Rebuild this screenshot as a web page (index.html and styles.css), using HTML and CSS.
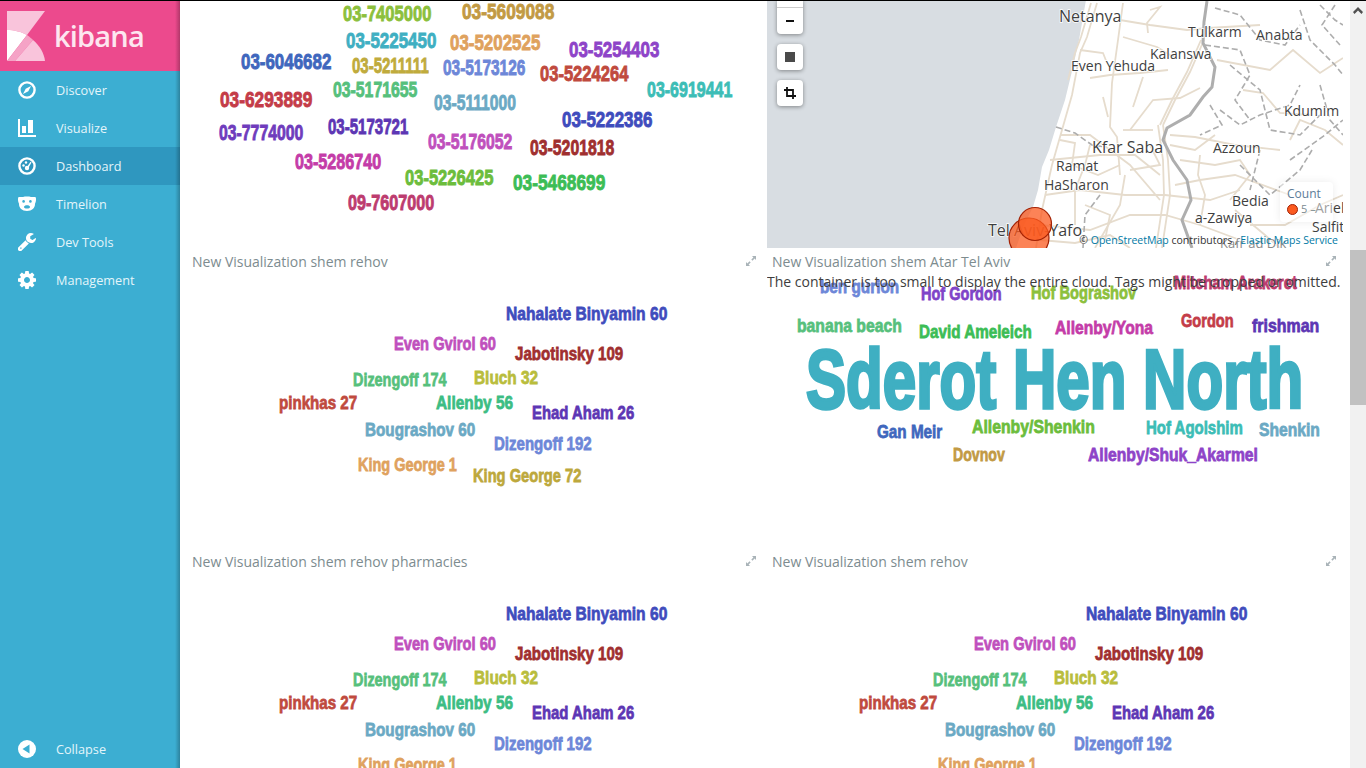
FILE: index.html
```html
<!DOCTYPE html>
<html lang="en">
<head>
    <meta charset="UTF-8">
    <meta name="viewport" content="width=device-width, initial-scale=1.0">
    <title>Dashboard - Kibana</title>
    <link rel="stylesheet" href="styles.css">
    <script src="cloud.js"></script>
</head>
<body>
    <div class="app">
        <nav class="sidebar">
            <div class="logo">
                <svg class="logo-mark" viewBox="7 11 38 50">
                    <path fill="#f9c4db" d="M7 11H45L27 35C22 32 14 30 7 30Z"/>
                    <path fill="#fff" d="M7 30C14 30 22 32 27 35L7 61Z"/>
                    <path fill="#f5a3c6" d="M7 61L27 35C30 37 32 39 33 40L15 61Z"/>
                    <path fill="#f9c4db" d="M33 40C40 46 44 53 45 61H15Z"/>
                </svg>
                <span class="logo-text">kibana</span>
            </div>
            <a class="nav-item">
                <svg class="nav-icon" viewBox="0 0 18 18"><circle cx="9" cy="9" r="7.6" fill="none" stroke="#fff" stroke-width="2.4"/><path fill="#fff" d="M13 5L10.3 10.3 5 13 7.7 7.7Z"/></svg>
                Discover
            </a>
            <a class="nav-item">
                <svg class="nav-icon" viewBox="0 0 18 18"><path fill="#fff" d="M0 0H2V16H18V18H0Z"/><path fill="#fff" d="M4 7H8V14H4ZM10 1H15V14H10Z"/></svg>
                Visualize
            </a>
            <a class="nav-item active">
                <svg class="nav-icon" viewBox="0 0 18 18"><circle cx="9" cy="9" r="7.6" fill="none" stroke="#fff" stroke-width="2.4"/><circle cx="9" cy="11" r="2.2" fill="#fff"/><path fill="#fff" d="M9 10L12.5 4.8 13.5 5.6 10.4 11Z"/><circle cx="5.5" cy="8.5" r="1.2" fill="#fff"/><circle cx="8" cy="5.5" r="1.2" fill="#fff"/></svg>
                Dashboard
            </a>
            <a class="nav-item">
                <svg class="nav-icon" viewBox="0 0 18 18"><path fill="#fff" d="M1 2H5C7 1.4 11 1.4 13 2H17C18 2 18 3 18 5 18 7 17 8 17 9 17 13 14 16 9 16 4 16 1 13 1 9 1 8 0 7 0 5 0 3 0 2 1 2Z"/><circle cx="5.6" cy="6.4" r="1.3" fill="#3caed2"/><circle cx="12.4" cy="6.4" r="1.3" fill="#3caed2"/><path fill="#3caed2" d="M6 12C6 9.5 12 9.5 12 12 12 14 6 14 6 12Z"/></svg>
                Timelion
            </a>
            <a class="nav-item">
                <svg class="nav-icon" viewBox="128 128 1600 1600"><path fill="#fff" d="M448 1472q0-26-19-45t-45-19-45 19-19 45 19 45 45 19 45-19 19-45zm644-420l-682 682q-37 37-90 37-52 0-91-37l-106-108q-38-36-38-90 0-53 38-91l681-681q39 98 114.5 173.5t173.5 114.5zm634-435q0 39-23 106-47 134-164.5 217.5t-258.5 83.5q-185 0-316.5-131.5t-131.5-316.5 131.5-316.5 316.5-131.5q58 0 121.5 16.5t107.5 46.5q16 11 16 28t-16 28l-293 169v224l193 107q5-3 79-48.5t135.5-81 70.5-35.5q15 0 23.5 10t8.5 25z"/></svg>
                Dev Tools
            </a>
            <a class="nav-item">
                <svg class="nav-icon" viewBox="128 128 1536 1536"><path fill="#fff" d="M1152 896q0-106-75-181t-181-75-181 75-75 181 75 181 181 75 181-75 75-181zm512-109v222q0 12-8 23t-20 13l-185 28q-19 54-39 91 35 50 107 138 10 12 10 25t-9 23q-27 37-99 108t-94 71q-12 0-26-9l-138-108q-44 23-91 38-16 136-29 186-7 28-36 28h-222q-14 0-24.5-8.5t-11.5-21.5l-28-184q-49-16-90-37l-141 107q-10 9-25 9-14 0-25-11-126-114-165-168-7-10-7-23 0-12 8-23 15-21 51-66.5t54-70.5q-27-50-41-99l-183-27q-13-2-21-12.5t-8-23.5v-222q0-12 8-23t19-13l186-28q14-46 39-92-40-57-107-138-10-12-10-24 0-10 9-23 26-36 98.5-107.5t94.5-71.5q13 0 26 10l138 107q44-23 91-38 16-136 29-186 7-28 36-28h222q14 0 24.5 8.5t11.5 21.5l28 184q49 16 90 37l142-107q9-9 24-9 13 0 25 10 129 119 165 170 7 8 7 22 0 12-8 23-15 21-51 66.5t-54 70.5q26 50 41 98l183 28q13 2 21 12.5t8 23.5z"/></svg>
                Management
            </a>
            <a class="nav-item collapse">
                <svg class="nav-icon" viewBox="0 0 18 18"><circle cx="9" cy="9" r="9" fill="#fff"/><path fill="#3caed2" d="M4.5 9L11.5 4.5V13.5Z"/></svg>
                Collapse
            </a>
        </nav>

        <main class="dashboard">
            <section class="panel">
                <div class="cloud" data-words="phones" data-origin="187,1"></div>
            </section>

            <section class="panel map">
                <svg class="map-svg" viewBox="767 1 576 247">
                    <rect x="767" y="0" width="576" height="248" fill="#fff"/>
                    <path fill="#d8dde2" d="M767 0H1086L1079 40 1073 67 1065 100 1056 127 1049 150 1042 167 1038 190 1033 207 1024 225 1016 248H767Z"/>
                    <g class="roads">
                        <path d="M1204 40L1190 72 1175 100 1163 125"/>
                        <path d="M1201 40L1187 72 1172 100 1160 125"/>
                        <path d="M1163 125L1168 160 1170 195 1162 248"/>
                        <path d="M1158 125L1163 160 1164 195 1156 248"/>
                        <path d="M1097 3L1087 37 1080 53 1072 95 1062 130 1052 165 1042 210 1036 248"/>
                        <path d="M1091 3L1081 37 1075 53 1068 80"/>
                        <path d="M1120 20L1150 25 1187 30 1208 28 1260 25"/>
                        <path d="M1123 3L1118 40 1112 83 1110 127 1117 137 1120 175"/>
                        <path d="M1150 10L1160 7 1147 23 1148 33"/>
                        <path d="M1123 37L1157 47 1175 58"/>
                        <path d="M1090 78L1110 75 1140 73 1168 70"/>
                        <path d="M1133 107L1143 77"/>
                        <path d="M1130 130L1153 100 1180 98 1200 88"/>
                        <path d="M1123 130L1153 130"/>
                        <path d="M1103 97L1108 117"/>
                        <path d="M1080 50L1103 53 1107 63"/>
                        <path d="M1060 135L1090 135 1110 150 1130 165 1160 200"/>
                        <path d="M1050 160L1100 155 1135 155 1160 175"/>
                        <path d="M1045 195L1080 190 1125 195 1165 195 1210 200 1240 190"/>
                        <path d="M1040 225L1090 230 1130 215 1165 215 1200 225 1240 240"/>
                        <path d="M1075 225L1075 190 1085 165 1090 145"/>
                        <path d="M1095 248L1120 205 1125 175"/>
                        <path d="M1060 140L1075 143 1072 165 1098 175 1120 165"/>
                        <path d="M1085 205L1110 215 1105 240"/>
                        <path d="M1130 170L1160 165 1150 145"/>
                        <path d="M1040 240L1075 243 1110 235 1130 248"/>
                        <path d="M1170 135L1195 137 1235 145 1280 150"/>
                        <path d="M1170 145L1195 150 1215 135"/>
                        <path d="M1217 60L1270 70 1293 50 1320 73 1343 58"/>
                        <path d="M1243 90L1263 93 1280 113 1310 115"/>
                        <path d="M1180 160L1215 165 1240 160 1250 175 1230 200"/>
                        <path d="M1175 185L1200 180 1235 175 1290 195"/>
                        <path d="M1200 155L1198 175 1205 195 1200 225"/>
                        <path d="M1250 225L1285 225 1320 205 1343 195"/>
                        <path d="M1290 140L1300 120 1325 130 1343 145"/>
                        <path d="M1235 210L1265 235 1280 248"/>
                    </g>
                    <g class="tracks">
                        <path d="M1215 8L1240 15 1260 40 1285 45 1300 25"/>
                        <path d="M1205 45L1240 50 1250 75 1235 100 1250 120"/>
                        <path d="M1230 65L1260 90 1270 130 1300 135 1320 115"/>
                        <path d="M1300 10L1310 40 1335 65 1343 75"/>
                        <path d="M1320 5L1335 20 1343 25"/>
                        <path d="M1335 5L1322 25 1340 45"/>
                        <path d="M1220 110L1240 125 1260 115 1290 105 1300 85"/>
                        <path d="M1210 105L1222 125 1200 135"/>
                        <path d="M1260 150L1250 190"/>
                        <path d="M1240 165L1270 195 1300 170 1312 150"/>
                        <path d="M1320 85L1330 120 1343 135"/>
                        <path d="M1290 160L1325 135 1343 120"/>
                        <path d="M1056 127L1075 133 1092 145 1105 147"/>
                        <path d="M1100 195L1085 215 1083 248"/>
                    </g>
                    <path class="border-line" d="M1207 1L1204 22 1203 43 1215 67 1212 87 1203 97 1190 115 1167 128 1163 140 1173 160 1187 180 1191 200 1182 220 1192 248"/>
                    <g class="map-label">
                        <text x="1059" y="22" font-size="16">Netanya</text>
                        <text x="1188" y="37" font-size="14">Tulkarm</text>
                        <text x="1256" y="40" font-size="14">Anabta</text>
                        <text x="1150" y="59" font-size="14">Kalanswa</text>
                        <text x="1071" y="71" font-size="14">Even Yehuda</text>
                        <text x="1284" y="116" font-size="14">Kdumim</text>
                        <text x="1092" y="153" font-size="16">Kfar Saba</text>
                        <text x="1213" y="153" font-size="14">Azzoun</text>
                        <text x="1056" y="171" font-size="14">Ramat</text>
                        <text x="1044" y="190" font-size="14">HaSharon</text>
                        <text x="1232" y="206" font-size="14">Bedia</text>
                        <text x="1195" y="223" font-size="14">a-Zawiya</text>
                        <text x="1315" y="213" font-size="14">Ariel</text>
                        <text x="1312" y="232" font-size="14">Salfit</text>
                        <text x="988" y="236" font-size="16">Tel Aviv-Yafo</text>
                        <text class="map-label-dim" x="1220" y="248" font-size="13">Kafr ad Dik</text>
                    </g>
                    <circle class="hit" cx="1029" cy="238" r="20"/>
                    <circle class="hit" cx="1035" cy="224" r="16.5"/>
                </svg>
                <div class="map-controls">
                    <div class="map-zoom">
                        <span class="map-divider"></span>
                        <span class="map-minus"></span>
                    </div>
                    <div class="map-btn"><span class="map-square"></span></div>
                    <div class="map-btn">
                        <svg width="12" height="12" viewBox="0 0 12 12"><path fill="none" stroke="#111" stroke-width="1.8" d="M3 0V9H12M0 3H9V12"/></svg>
                    </div>
                </div>
                <div class="map-legend">
                    <div class="legend-title">Count</div>
                    <div class="legend-row"><span class="legend-dot"></span>5 &ndash;</div>
                </div>
                <div class="map-attribution">&copy; <a>OpenStreetMap</a> contributors , <a>Elastic Maps Service</a></div>
            </section>

            <section class="panel">
                <header class="panel-title">New Visualization shem rehov
                    <svg class="expand" viewBox="0 0 10 10"><path d="M6 0H10V4L8.6 2.6 6.5 4.7 5.3 3.5 7.4 1.4ZM4 10H0V6L1.4 7.4 3.5 5.3 4.7 6.5 2.6 8.6Z"/></svg>
                </header>
                <div class="cloud" data-words="streets" data-origin="187,277"></div>
            </section>

            <section class="panel">
                <header class="panel-title">New Visualization shem Atar Tel Aviv
                    <svg class="expand" viewBox="0 0 10 10"><path d="M6 0H10V4L8.6 2.6 6.5 4.7 5.3 3.5 7.4 1.4ZM4 10H0V6L1.4 7.4 3.5 5.3 4.7 6.5 2.6 8.6Z"/></svg>
                </header>
                <div class="cloud" data-words="places" data-origin="767,277"></div>
                <div class="cloud-warning">The container is too small to display the entire cloud. Tags might be cropped or omitted.</div>
            </section>

            <section class="panel">
                <header class="panel-title">New Visualization shem rehov pharmacies
                    <svg class="expand" viewBox="0 0 10 10"><path d="M6 0H10V4L8.6 2.6 6.5 4.7 5.3 3.5 7.4 1.4ZM4 10H0V6L1.4 7.4 3.5 5.3 4.7 6.5 2.6 8.6Z"/></svg>
                </header>
                <div class="cloud" data-words="streets" data-origin="187,277"></div>
            </section>

            <section class="panel">
                <header class="panel-title">New Visualization shem rehov
                    <svg class="expand" viewBox="0 0 10 10"><path d="M6 0H10V4L8.6 2.6 6.5 4.7 5.3 3.5 7.4 1.4ZM4 10H0V6L1.4 7.4 3.5 5.3 4.7 6.5 2.6 8.6Z"/></svg>
                </header>
                <div class="cloud" data-words="streets" data-origin="187,277"></div>
            </section>
        </main>

        <div class="scrollbar">
            <svg class="scroll-arrow" width="10" height="7" viewBox="0 0 10 7"><path fill="#505050" d="M5 0L10 5 8.5 7 5 3.5 1.5 7 0 5Z"/></svg>
            <div class="scroll-thumb"></div>
        </div>
    </div>
</body>
</html>
```

FILE: styles.css
```css
* {
    box-sizing: border-box;
}
body {
    margin: 0;
    font-family: "Open Sans", sans-serif;
    background-color: #fff;
    overflow: hidden;
}
.app {
    display: flex;
    height: 768px;
    border-top: 1px solid #000;
    overflow: hidden;
}

/* sidebar */
.sidebar {
    position: relative;
    display: flex;
    flex-direction: column;
    flex: 0 0 180px;
    background-color: #3caed2;
}
.sidebar::after {
    content: "";
    position: absolute;
    top: 0;
    right: 0;
    bottom: 0;
    width: 5px;
    background: linear-gradient(to right, rgba(0, 0, 0, 0), rgba(0, 0, 0, 0.25));
}
.logo {
    display: flex;
    align-items: center;
    height: 70px;
    padding-left: 7px;
    background-color: #ec4a8d;
}
.logo-mark {
    width: 38px;
    height: 50px;
}
.logo-text {
    margin-left: 9px;
    margin-top: -1px;
    font-size: 29px;
    font-weight: 600;
    line-height: 1;
    letter-spacing: -0.8px;
    color: #fde6f0;
}
.nav-item {
    display: flex;
    align-items: center;
    height: 38px;
    padding-left: 18px;
    font-size: 12.7px;
    color: #e4f5fa;
}
.nav-item.active {
    background-color: #2f97bf;
}
.nav-item.collapse {
    position: absolute;
    left: 0;
    right: 0;
    bottom: 0;
}
.nav-icon {
    width: 18px;
    height: 18px;
    margin-right: 20px;
}

/* dashboard grid */
.dashboard {
    display: grid;
    flex: 0 0 1170px;
    grid-template-columns: 576px 576px;
    grid-template-rows: 247px 300px 220px;
    column-gap: 4px;
    padding: 0 7px;
    overflow: hidden;
}
.panel {
    position: relative;
    display: flex;
    flex-direction: column;
    min-height: 0;
    overflow: hidden;
}
.panel-title {
    display: flex;
    flex: 0 0 28px;
    align-items: center;
    justify-content: space-between;
    padding: 0 7px 2px 5px;
    font-size: 14px;
    color: #7d8c8f;
}
.expand {
    width: 10px;
    height: 10px;
    fill: #a9b3b8;
}
.cloud {
    position: relative;
    flex: 1;
}
.word {
    position: absolute;
    font-family: "Liberation Sans Narrow", "Liberation Sans", sans-serif;
    font-weight: 700;
    line-height: 1;
    white-space: nowrap;
    transform-origin: left center;
    -webkit-text-stroke: 0.04em currentColor;
}
.cloud-warning {
    position: absolute;
    left: 0;
    top: 24px;
    font-size: 14px;
    line-height: 20px;
    white-space: nowrap;
    color: #3d3d3d;
}

/* map */
.map-svg {
    display: block;
    width: 576px;
    height: 247px;
}
.roads path {
    fill: none;
    stroke: #e6dccd;
    stroke-width: 1.8;
}
.tracks path {
    fill: none;
    stroke: #adadad;
    stroke-width: 1.6;
    stroke-dasharray: 6 3;
}
.border-line {
    fill: none;
    stroke: #aeaeae;
    stroke-width: 3;
}
.map-label text {
    font-family: "Open Sans", sans-serif;
    fill: #3f3f3f;
    stroke: #fff;
    stroke-width: 1.5px;
    paint-order: stroke;
}
.map-label .map-label-dim {
    fill: #8a8a8a;
}
.hit {
    fill: #fb5a1f;
    fill-opacity: 0.75;
    stroke: #a32205;
    stroke-width: 1.2;
}
.map-controls {
    position: absolute;
    left: 10px;
    top: -1px;
    display: flex;
    flex-direction: column;
    gap: 10px;
}
.map-zoom,
.map-btn {
    display: flex;
    align-items: center;
    justify-content: center;
    width: 26px;
    height: 26px;
    background-color: #fff;
    border-radius: 4px;
    box-shadow: 0 1px 4px rgba(0, 0, 0, 0.4);
}
.map-zoom {
    position: relative;
    height: 34px;
    border-radius: 0 0 4px 4px;
}
.map-divider {
    position: absolute;
    left: 0;
    right: 0;
    top: 7px;
    height: 1px;
    background-color: #ccc;
}
.map-minus {
    width: 8px;
    height: 2px;
    margin-top: 7px;
    background-color: #111;
}
.map-square {
    width: 10px;
    height: 10px;
    background-color: #4a4a4a;
}
.map-legend {
    position: absolute;
    left: 513px;
    top: 181px;
    width: 53px;
    height: 40px;
    padding: 5px 0 0 7px;
    font-size: 12px;
    line-height: 14px;
    color: #5c7c98;
    background-color: rgba(255, 255, 255, 0.5);
    border-radius: 4px;
    box-shadow: 0 0 8px rgba(0, 0, 0, 0.08);
}
.legend-row {
    display: flex;
    align-items: center;
    margin-top: 1px;
    font-size: 11px;
    color: #7a8a90;
}
.legend-dot {
    width: 11px;
    height: 11px;
    margin-right: 3px;
    background-color: #fb5a1f;
    border: 1px solid #a32205;
    border-radius: 50%;
}
.map-attribution {
    position: absolute;
    right: 5px;
    top: 232px;
    font-size: 10.5px;
    line-height: 14px;
    white-space: nowrap;
    color: #333;
}
.map-attribution a {
    color: #0079a5;
}

/* fake browser scrollbar */
.scrollbar {
    display: flex;
    flex-direction: column;
    align-items: center;
    flex: 0 0 16px;
    background-color: #f1f1f1;
}
.scroll-arrow {
    margin-top: 6px;
}
.scroll-thumb {
    width: 100%;
    height: 155px;
    margin-top: 236px;
    background-color: #c1c1c1;
}
```

FILE: cloud.js
```js
// [text, left, right, centre y, font size, colour] in dashboard coordinates
var words = {
    phones: [
        ['03-7405000', 343, 431, 14, 22, '#8cc03c'],
        ['03-5609088', 462, 554, 12, 22, '#c29a44'],
        ['03-5225450', 346, 436, 41, 22, '#3fafc2'],
        ['03-5202525', 450, 540, 43, 22, '#dfa25e'],
        ['03-5254403', 569, 659, 50, 22, '#8e44c8'],
        ['03-6046682', 241, 331, 62, 22, '#3f67bd'],
        ['03-5211111', 352, 429, 66, 22, '#c0ab3c'],
        ['03-5173126', 443, 525, 68, 22, '#6d87d8'],
        ['03-5224264', 540, 628, 74, 22, '#c04a3e'],
        ['03-6919441', 647, 732, 90, 22, '#3cbdb6'],
        ['03-5171655', 333, 417, 90, 22, '#56c07c'],
        ['03-6293889', 220, 312, 100, 22, '#c43c48'],
        ['03-5111000', 434, 516, 103, 22, '#6ba9c4'],
        ['03-5222386', 562, 652, 120, 22, '#3f4cbd'],
        ['03-7774000', 219, 303, 133, 22, '#6f3cbd'],
        ['03-5173721', 328, 408, 127, 22, '#5d36b4'],
        ['03-5176052', 428, 512, 142, 22, '#c050bd'],
        ['03-5201818', 530, 614, 148, 22, '#a02f2f'],
        ['03-5286740', 295, 381, 162, 22, '#c43ca8'],
        ['03-5226425', 405, 493, 178, 22, '#6cbd3c'],
        ['03-5468699', 513, 605, 183, 22, '#3cbd56'],
        ['09-7607000', 348, 434, 203, 22, '#bd3c6f']
    ],
    streets: [
        ['Nahalate Binyamin 60', 506, 667, 314, 19, '#3f4cbd'],
        ['Even Gvirol 60', 394, 496, 344, 19, '#c050bd'],
        ['Jabotinsky 109', 515, 623, 354, 19, '#a02f2f'],
        ['Dizengoff 174', 353, 447, 380, 19, '#56c07c'],
        ['Bluch 32', 474, 538, 378, 19, '#b9bd3c'],
        ['pinkhas 27', 279, 357, 403, 19, '#c04a3e'],
        ['Allenby 56', 436, 513, 403, 19, '#3cbd83'],
        ['Ehad Aham 26', 532, 634, 413, 19, '#5d36b4'],
        ['Bougrashov 60', 365, 475, 430, 19, '#6ba9c4'],
        ['Dizengoff 192', 494, 592, 444, 19, '#6d87d8'],
        ['King George 1', 358, 457, 465, 19, '#dfa25e'],
        ['King George 72', 473, 581, 476, 19, '#bda83c']
    ],
    places: [
        ['ben gurion', 820, 899, 287, 19, '#6d87d8'],
        ['Hof Gordon', 921, 1002, 294, 19, '#7f44c8'],
        ['Hof Bograshov', 1031, 1136, 293, 19, '#8cc03c'],
        ['Mitcham Arakeret', 1174, 1297, 283, 19, '#bd3c6f'],
        ['banana beach', 797, 902, 326, 19, '#56c07c'],
        ['David Ameleich', 919, 1032, 332, 19, '#3cbd56'],
        ['Allenby/Yona', 1055, 1153, 328, 19, '#c43ca8'],
        ['Gordon', 1181, 1234, 321, 19, '#c43c48'],
        ['frishman', 1252, 1319, 326, 19, '#5d36b4'],
        ['Sderot Hen North', 806, 1303, 380, 84, '#3fafc2'],
        ['Gan Meir', 877, 942, 432, 19, '#3f67bd'],
        ['Allenby/Shenkin', 972, 1095, 427, 19, '#6cbd3c'],
        ['Hof Agolshim', 1146, 1243, 428, 19, '#3cbdb6'],
        ['Shenkin', 1259, 1320, 430, 19, '#6ba9c4'],
        ['Dovnov', 953, 1005, 455, 19, '#c29a44'],
        ['Allenby/Shuk_Akarmel', 1088, 1258, 455, 19, '#8e44c8']
    ]
};

document.addEventListener('DOMContentLoaded', function() {
    document.querySelectorAll('.cloud').forEach(function(cloud) {
        var origin = cloud.dataset.origin.split(',').map(Number);
        words[cloud.dataset.words].forEach(function(w) {
            var span = document.createElement('span');
            span.className = 'word';
            span.textContent = w[0];
            span.style.left = (w[1] - origin[0]) + 'px';
            span.style.top = (w[3] - origin[1] - w[4] / 2) + 'px';
            span.style.fontSize = w[4] + 'px';
            span.style.color = w[5];
            cloud.appendChild(span);
            // squeeze or stretch so the word takes the width the cloud gave it
            span.style.transform = 'scaleX(' + ((w[2] - w[1]) / span.offsetWidth) + ')';
        });
    });
});
```
